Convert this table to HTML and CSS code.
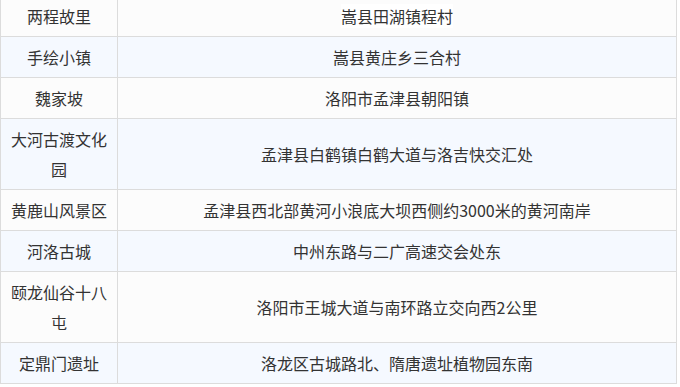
FILE: index.html
```html
<!DOCTYPE html>
<html lang="zh-CN">
<head>
    <meta charset="UTF-8">
    <meta name="viewport" content="width=device-width, initial-scale=1.0">
    <title>景点地址</title>
    <link rel="stylesheet" href="styles.css">
</head>
<body>
    <table class="spots">
        <tr>
            <td class="name">两程故里</td>
            <td class="addr"><span class="hl">嵩县田湖镇程村</span></td>
        </tr>
        <tr>
            <td class="name">手绘小镇</td>
            <td class="addr">嵩县黄庄乡三合村</td>
        </tr>
        <tr>
            <td class="name">魏家坡</td>
            <td class="addr">洛阳市孟津县朝阳镇</td>
        </tr>
        <tr>
            <td class="name">大河古渡文化园</td>
            <td class="addr">孟津县白鹤镇白鹤大道与洛吉快交汇处</td>
        </tr>
        <tr>
            <td class="name">黄鹿山风景区</td>
            <td class="addr">孟津县西北部黄河小浪底大坝西侧约3000米的黄河南岸</td>
        </tr>
        <tr>
            <td class="name">河洛古城</td>
            <td class="addr">中州东路与二广高速交会处东</td>
        </tr>
        <tr>
            <td class="name">颐龙仙谷十八屯</td>
            <td class="addr">洛阳市王城大道与南环路立交向西2公里</td>
        </tr>
        <tr>
            <td class="name">定鼎门遗址</td>
            <td class="addr">洛龙区古城路北、隋唐遗址植物园东南</td>
        </tr>
    </table>
</body>
</html>
```

FILE: styles.css
```css
body {
    margin: 0;
    background-color: #fff;
    font-family: "Noto Sans CJK SC", "Liberation Sans", sans-serif;
    color: #333;
}
.spots {
    width: 677px;
    margin-top: -5px;
    border-collapse: collapse;
    font-size: 16px;
    line-height: 30px;
}
.spots td {
    border: 1px solid #dcdcdc;
    padding: 5px;
    text-align: center;
    vertical-align: middle;
}
.spots tr:nth-child(odd) {
    background-color: #fcfcfc;
}
.spots tr:nth-child(even) {
    background-color: #f5f9ff;
}
.spots .name {
    width: 106px;
}
.hl {
    background-color: #fff;
}
```
